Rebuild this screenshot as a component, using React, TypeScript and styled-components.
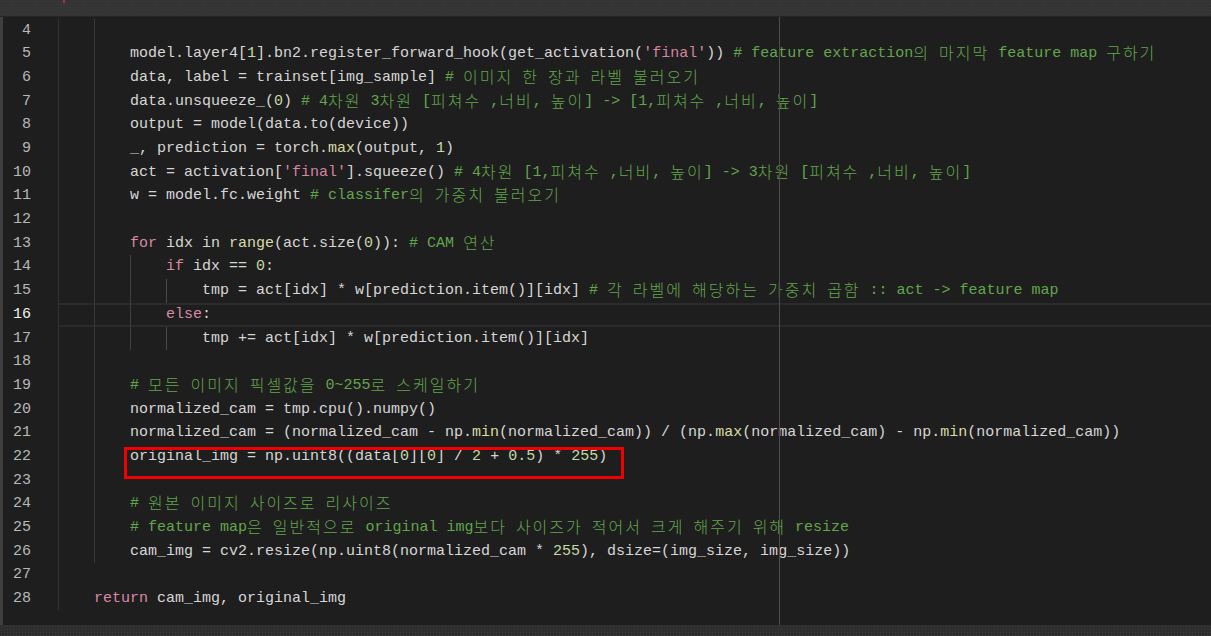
import React from "react";
import styled, { createGlobalStyle } from "styled-components";

const GlobalStyle = createGlobalStyle`
  html, body { margin: 0; padding: 0; background: #1e1e1e; overflow: hidden; }
  #root { width: 1211px; height: 636px; }
`;

const LINE_H = 23.7;

const Window = styled.div`
  width: 1211px;
  height: 636px;
  display: flex;
  flex-direction: column;
  background: #1e1e1e;
  font-family: "Liberation Mono", "Noto Sans CJK KR", monospace;
  font-size: 15px;
  color: #d6d6d6;
`;

const TopBar = styled.div`
  height: 16px;
  flex-shrink: 0;
  background-color: #343434;
  background-image: radial-gradient(#3a3a3a 0.6px, transparent 0.9px);
  background-size: 3px 3px;
  border-bottom: 1px solid #262626;
  padding-left: 63px;
  box-sizing: content-box;
`;

const Caret = styled.div`
  width: 2px;
  height: 3px;
  background: #c0282a;
`;

const Editor = styled.div`
  flex: 1;
  display: flex;
  position: relative;
  overflow: hidden;
  background: #1e1e1e;
`;

const Strip = styled.div`
  width: 3px;
  flex-shrink: 0;
  background: #3f3f3f;
`;

const Lines = styled.div`
  flex: 1;
  padding-top: 1.6px;
  display: flex;
  flex-direction: column;
`;

const Ruler = styled.div`
  position: absolute;
  left: 779px;
  top: 0;
  bottom: 0;
  width: 1px;
  background: #4e4e4e;
`;

const Line = styled.div`
  display: flex;
  height: ${LINE_H}px;
  line-height: ${LINE_H}px;
  flex-shrink: 0;
`;

const LineNo = styled.div<{ $active?: boolean }>`
  width: 55px;
  padding-right: 27px;
  box-sizing: border-box;
  text-align: right;
  flex-shrink: 0;
  color: ${(p) => (p.$active ? "#f2f2f2" : "#b8b8b8")};
`;

const Code = styled.div<{ $active?: boolean }>`
  flex: 1;
  display: flex;
  position: relative;
  white-space: pre;
  box-shadow: ${(p) =>
    p.$active ? "inset 0 2px #2b2b2b, inset 0 -2px #2b2b2b" : "none"};
`;

const guideColors = ["#323232", "#393939", "#404040", "#4a4a4a"];

const Indent = styled.span<{ $level: number }>`
  width: 36px;
  height: 100%;
  flex-shrink: 0;
  box-sizing: border-box;
  border-left: 1px solid ${(p) => guideColors[p.$level] || "#444"};
`;

const Content = styled.div`
  white-space: pre;
  height: ${LINE_H}px;
  line-height: ${LINE_H}px;
`;

const tokenColors: Record<string, string> = {
  plain: "#d6d6d6",
  comment: "#62a64b",
  keyword: "#d88aa4",
  string: "#d684a2",
  number: "#c6dba4",
  func: "#d9dca6",
};

const Tok = styled.span<{ $kind: string }>`
  color: ${(p) => tokenColors[p.$kind]};
`;

const Hangul = styled.span`
  display: inline-block;
  vertical-align: top;
  height: ${LINE_H}px;
  line-height: ${LINE_H - 3}px;
  font-family: "Noto Sans CJK KR", sans-serif;
  font-size: 16px;
  font-weight: 300;
  letter-spacing: 2px;
`;

const Highlight = styled.div`
  position: absolute;
  top: 2px;
  width: 500px;
  height: 32px;
  box-sizing: border-box;
  border: 3px solid #f00000;
  pointer-events: none;
`;

type LineDef = {
  n: number;
  indent: number;
  code?: string;
  comment?: string;
  boxed?: boolean;
};

const lines: LineDef[] = [
  { n: 4, indent: 2 },
  {
    n: 5,
    indent: 2,
    code: "model.layer4[1].bn2.register_forward_hook(get_activation('final'))",
    comment: "# feature extraction의 마지막 feature map 구하기",
  },
  {
    n: 6,
    indent: 2,
    code: "data, label = trainset[img_sample]",
    comment: "# 이미지 한 장과 라벨 불러오기",
  },
  {
    n: 7,
    indent: 2,
    code: "data.unsqueeze_(0)",
    comment: "# 4차원 3차원 [피쳐수 ,너비, 높이] -> [1,피쳐수 ,너비, 높이]",
  },
  { n: 8, indent: 2, code: "output = model(data.to(device))" },
  { n: 9, indent: 2, code: "_, prediction = torch.max(output, 1)" },
  {
    n: 10,
    indent: 2,
    code: "act = activation['final'].squeeze()",
    comment: "# 4차원 [1,피쳐수 ,너비, 높이] -> 3차원 [피쳐수 ,너비, 높이]",
  },
  {
    n: 11,
    indent: 2,
    code: "w = model.fc.weight",
    comment: "# classifer의 가중치 불러오기",
  },
  { n: 12, indent: 2 },
  {
    n: 13,
    indent: 2,
    code: "for idx in range(act.size(0)):",
    comment: "# CAM 연산",
  },
  { n: 14, indent: 3, code: "if idx == 0:" },
  {
    n: 15,
    indent: 4,
    code: "tmp = act[idx] * w[prediction.item()][idx]",
    comment: "# 각 라벨에 해당하는 가중치 곱함 :: act -> feature map",
  },
  { n: 16, indent: 3, code: "else:" },
  { n: 17, indent: 4, code: "tmp += act[idx] * w[prediction.item()][idx]" },
  { n: 18, indent: 2 },
  { n: 19, indent: 2, comment: "# 모든 이미지 픽셀값을 0~255로 스케일하기" },
  { n: 20, indent: 2, code: "normalized_cam = tmp.cpu().numpy()" },
  {
    n: 21,
    indent: 2,
    code:
      "normalized_cam = (normalized_cam - np.min(normalized_cam)) / (np.max(normalized_cam) - np.min(normalized_cam))",
  },
  {
    n: 22,
    indent: 2,
    code: "original_img = np.uint8((data[0][0] / 2 + 0.5) * 255)",
    boxed: true,
  },
  { n: 23, indent: 2 },
  { n: 24, indent: 2, comment: "# 원본 이미지 사이즈로 리사이즈" },
  {
    n: 25,
    indent: 2,
    comment:
      "# feature map은 일반적으로 original img보다 사이즈가 적어서 크게 해주기 위해 resize",
  },
  {
    n: 26,
    indent: 2,
    code: "cam_img = cv2.resize(np.uint8(normalized_cam * 255), dsize=(img_size, img_size))",
  },
  { n: 27, indent: 1 },
  { n: 28, indent: 1, code: "return cam_img, original_img" },
];

const ACTIVE_LINE = 16;
const HANGUL = /[\u1100-\u11FF\u3130-\u318F\uAC00-\uD7AF]/;

function splitHangul(text: string, keyBase: string): React.ReactNode[] {
  const parts = text.split(/([\u1100-\u11FF\u3130-\u318F\uAC00-\uD7AF]+)/);
  return parts
    .filter((p) => p.length > 0)
    .map((p, i) =>
      HANGUL.test(p) ? (
        <Hangul key={`${keyBase}-h${i}`}>{p}</Hangul>
      ) : (
        <React.Fragment key={`${keyBase}-t${i}`}>{p}</React.Fragment>
      )
    );
}

function tokenize(code: string): { kind: string; text: string }[] {
  const re =
    /('[^']*')|\b(for|if|else|return)\b|\b(max|min|range)(?=\()|(?<![\w.])(\d+(?:\.\d+)?)/g;
  const out: { kind: string; text: string }[] = [];
  let last = 0;
  let m: RegExpExecArray | null;
  while ((m = re.exec(code)) !== null) {
    if (m.index > last) out.push({ kind: "plain", text: code.slice(last, m.index) });
    const kind = m[1] ? "string" : m[2] ? "keyword" : m[3] ? "func" : "number";
    out.push({ kind, text: m[0] });
    last = m.index + m[0].length;
  }
  if (last < code.length) out.push({ kind: "plain", text: code.slice(last) });
  return out;
}

function CodeLine({ def }: { def: LineDef }) {
  const active = def.n === ACTIVE_LINE;
  const guides = Array.from({ length: def.indent }, (_, i) => (
    <Indent key={i} $level={i} />
  ));
  const toks = def.code ? tokenize(def.code) : [];
  return (
    <Line>
      <LineNo $active={active}>{def.n}</LineNo>
      <Code $active={active}>
        {guides}
        <Content>
          {toks.map((t, i) => (
            <Tok key={i} $kind={t.kind}>
              {t.text}
            </Tok>
          ))}
          {def.code && def.comment ? " " : ""}
          {def.comment ? (
            <Tok $kind="comment">{splitHangul(def.comment, `c${def.n}`)}</Tok>
          ) : null}
        </Content>
        {def.boxed ? <Highlight style={{ left: 36 * def.indent - 6 }} /> : null}
      </Code>
    </Line>
  );
}

const BottomBar = styled.div`
  height: 11px;
  flex-shrink: 0;
  background-color: #2e2e2e;
  background-image: radial-gradient(#3a3a3a 0.6px, transparent 0.9px);
  background-size: 3px 3px;
`;

export default function App() {
  return (
    <>
      <GlobalStyle />
      <Window>
        <TopBar>
          <Caret />
        </TopBar>
        <Editor>
          <Strip />
          <Lines>
            {lines.map((l) => (
              <CodeLine key={l.n} def={l} />
            ))}
          </Lines>
          <Ruler />
        </Editor>
        <BottomBar />
      </Window>
    </>
  );
}
